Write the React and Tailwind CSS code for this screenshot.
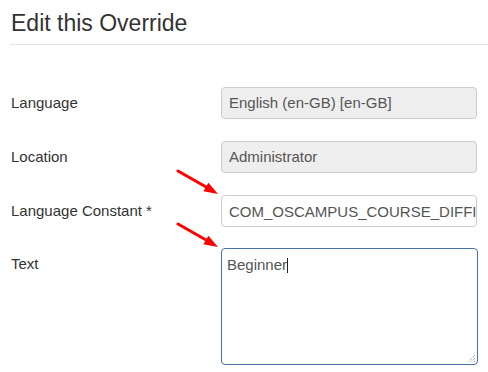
import React from "react";

function Field({ children, disabled }) {
  return (
    <div
      className={
        "h-[32px] w-[256px] rounded-[4px] border border-[#cccccc] px-[7px] text-[15px] leading-[30px] text-[#555555] overflow-hidden whitespace-nowrap " +
        (disabled ? "bg-[#eeeeee]" : "bg-white")
      }
    >
      {children}
    </div>
  );
}

function Arrow({ className }) {
  return (
    <svg className={className} width="44" height="30" viewBox="0 0 44 30">
      <line x1="2" y1="2" x2="31" y2="18.5" stroke="#ff0000" strokeWidth="3" strokeLinecap="round" />
      <polygon points="42,25 27.4,22.3 32.4,13.7" fill="#ff0000" />
    </svg>
  );
}

export default function App() {
  return (
    <div
      className="relative w-[488px] h-[372px] bg-white overflow-hidden pl-[10px]"
      style={{ fontFamily: '"Liberation Sans", Arial, sans-serif' }}
    >
      <h2 className="mt-[9px] pl-px pb-[7px] text-[23px] leading-[28px] font-normal text-[#333333] border-b border-[#e5e5e5]">
        Edit this Override
      </h2>
      <div className="mt-[42px] grid grid-cols-[211px_257px] gap-y-[22px] text-[15px] text-[#333333]">
        <div className="pt-[6px] pl-px leading-[20px]">Language</div>
        <Field disabled>English (en-GB) [en-GB]</Field>
        <div className="pt-[6px] pl-px leading-[20px]">Location</div>
        <Field disabled>Administrator</Field>
        <div className="pt-[6px] pl-px leading-[20px]">Language Constant *</div>
        <input
          readOnly
          value="COM_OSCAMPUS_COURSE_DIFFICULTY_BEGINNER"
          className="h-[32px] w-[256px] rounded-[4px] border border-[#cccccc] bg-white pl-[7px] pr-0 text-[15px] leading-[30px] text-[#555555] outline-none"
          style={{ fontFamily: '"Liberation Sans", Arial, sans-serif' }}
        />
        <div className="pt-[6px] pl-px leading-[20px] -mt-px">Text</div>
        <div className="relative -mt-px h-[117px] w-[257px] rounded-[4px] border border-[#4a72a8] bg-white px-[5px] pt-[6px] text-[15px] leading-[20px] text-[#555555]">
          <span>Beginner</span>
          <span className="inline-block w-px h-[15px] bg-[#222222] align-[-3px]"></span>
          <svg className="absolute right-[1px] bottom-[1px]" width="9" height="9" viewBox="0 0 9 9">
            <line x1="8" y1="1" x2="1" y2="8" stroke="#888" strokeWidth="1" strokeDasharray="1 1" />
            <line x1="8" y1="4" x2="4" y2="8" stroke="#888" strokeWidth="1" strokeDasharray="1 1" />
            <line x1="8" y1="7" x2="7" y2="8" stroke="#888" strokeWidth="1" />
          </svg>
        </div>
      </div>
      <Arrow className="absolute left-[176px] top-[169px]" />
      <Arrow className="absolute left-[176px] top-[222px]" />
    </div>
  );
}
